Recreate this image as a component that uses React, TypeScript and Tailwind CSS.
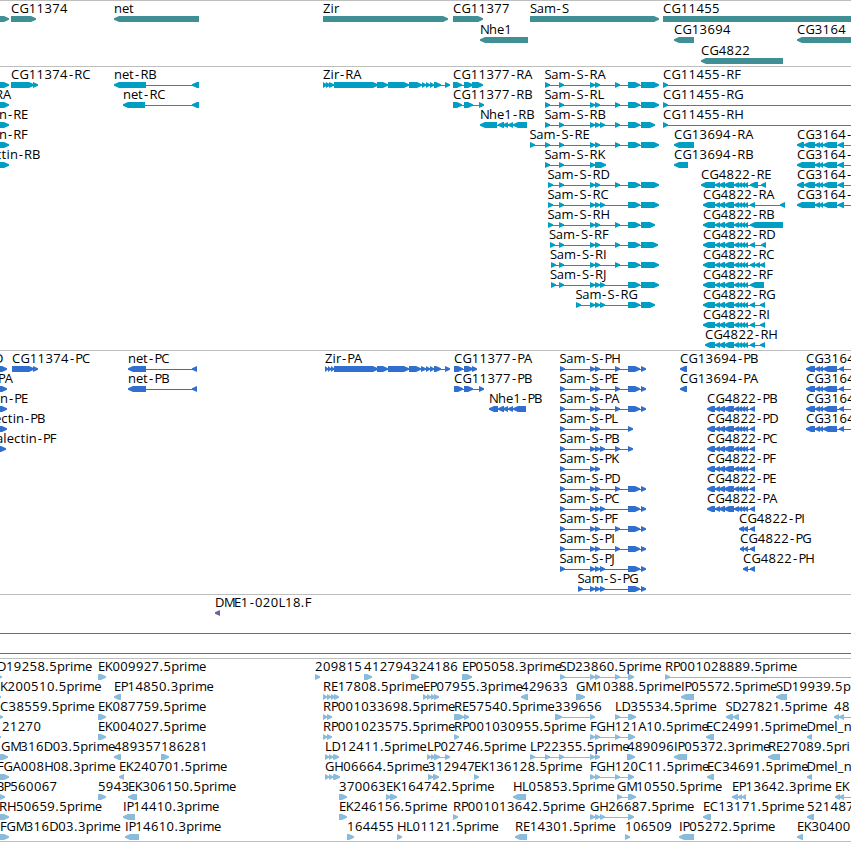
type Feature = {
  name: string;
  x: number;
  dir: "fwd" | "rev";
  // flat list of exon bounds: start, end, start, end...
  exons: number[];
};

const fwd = (name: string, x: number, ...exons: number[]): Feature => ({ name, x, dir: "fwd", exons });
const rev = (name: string, x: number, ...exons: number[]): Feature => ({ name, x, dir: "rev", exons });

const GENES: Feature[][] = [
  [
    fwd("", 0, -10, 9),
    fwd("CG11374", 11, 11, 36),
    rev("net", 114, 114, 199),
    fwd("Zir", 323, 323, 448),
    fwd("CG11377", 453, 453, 483),
    fwd("Sam-S", 530, 530, 659),
    fwd("CG11455", 663, 663, 900),
  ],
  [rev("Nhe1", 480, 480, 528), rev("CG13694", 674, 674, 694), rev("CG3164", 797, 797, 900)],
  [rev("CG4822", 701, 701, 783)],
];

// exon groups shared between isoforms
const S_TAIL = [628, 640, 641, 659];
const S_SHORT = [628, 640, 641, 655];
const S_TWO = [590, 595, 595, 600];
const S_THREE = [590, 595, 595, 600, 600, 605];
const S_MID = [615, 620];
const S_PTAIL = [628, 640, 641, 646];
const C48 = [715, 720, 719, 725, 724, 734, 734, 739, 738, 742, 741, 745, 744, 748];
const C31A = [797, 804, 804, 815, 815, 820, 819, 823, 823, 837, 838, 844, 900, 905];
const C31B = [797, 815, 815, 820, 819, 823, 823, 837, 838, 844, 900, 905];
const C31P = [806, 815, 815, 820, 819, 823, 823, 837, 839, 844, 900, 905];

const TRANSCRIPTS: Feature[][] = [
  [
    fwd("", 0, -10, 9),
    fwd("CG11374-RC", 11, 11, 34, 33, 38),
    rev("net-RB", 114, 114, 146, 192, 199),
    fwd("Zir-RA", 323, 323, 327, 326, 330, 329, 334, 334, 378, 377, 388, 388, 409, 409, 422, 422, 426, 426, 430, 430, 434, 434, 441, 445, 450),
    fwd("CG11377-RA", 453, 453, 462, 464, 473, 472, 483),
    fwd("Sam-S-RA", 544.5, 545, 550, 559, 564, ...S_TWO, ...S_MID, ...S_TAIL),
    fwd("CG11455-RF", 663, 663, 668, 900, 905),
  ],
  [
    fwd("RA", -5, -10, 9),
    rev("net-RC", 123, 123, 145, 192, 199),
    fwd("CG11377-RB", 453, 453, 462, 464, 473, 479, 484),
    fwd("Sam-S-RL", 544.5, 545, 550, 559, 564, ...S_TWO, ...S_MID, ...S_TAIL),
    fwd("CG11455-RG", 663, 663, 668, 900, 905),
  ],
  [
    fwd("n-RE", -1, -10, 9),
    rev("Nhe1-RB", 480, 480, 497, 498, 504, 503, 508, 508, 513, 513, 527),
    fwd("Sam-S-RB", 544.5, 545, 550, 559, 564, ...S_THREE, ...S_MID, ...S_SHORT),
    fwd("CG11455-RH", 663, 663, 668, 900, 905),
  ],
  [
    fwd("n-RF", -1, -10, 9),
    fwd("Sam-S-RE", 529.5, 530, 535, 545, 550, 559, 564, ...S_TWO, ...S_MID, ...S_TAIL),
    rev("CG13694-RA", 674, 674, 694),
    rev("CG3164-", 797, ...C31A),
  ],
  [
    fwd("ctin-RB", -5, -10, 9),
    fwd("Sam-S-RK", 544.5, 545, 550, 559, 564, 590, 595, 595, 606),
    rev("CG13694-RB", 674, 674, 688),
    rev("CG3164-", 797, ...C31B),
  ],
  [
    fwd("Sam-S-RD", 547.5, 548, 553, 559, 564, ...S_TWO, ...S_MID, ...S_TAIL),
    rev("CG4822-RE", 701, 701, 715, ...C48, 750, 758, 761, 766),
    rev("CG3164-", 797, ...C31A),
  ],
  [
    fwd("Sam-S-RC", 547.5, 548, 553, 559, 564, ...S_THREE, ...S_TAIL),
    rev("CG4822-RA", 703, 703, 715, ...C48, 750, 755, 780, 785),
    rev("CG3164-", 797, ...C31B),
  ],
  [
    fwd("Sam-S-RH", 547.5, 548, 553, 559, 564, ...S_TWO, ...S_MID, ...S_SHORT),
    rev("CG4822-RB", 703, 703, 715, ...C48, 750, 783),
  ],
  [
    fwd("Sam-S-RF", 549, 550, 555, 559, 564, ...S_TWO, ...S_MID, 628, 640, 641, 658),
    rev("CG4822-RD", 703, 703, 715, ...C48, 750, 755, 761, 766),
  ],
  [
    fwd("Sam-S-RI", 550, 551, 556, 559, 564, ...S_TWO, ...S_MID, ...S_TAIL),
    rev("CG4822-RC", 703, 703, 715, ...C48, 750, 755, 755, 760, 760, 765),
  ],
  [
    fwd("Sam-S-RJ", 550, 551, 556, 559, 564, ...S_THREE, ...S_TAIL),
    rev("CG4822-RF", 703, 703, 715, ...C48, 750, 764),
  ],
  [
    fwd("Sam-S-RG", 575.5, 576, 581, ...S_THREE, ...S_SHORT),
    rev("CG4822-RG", 703, 703, 715, ...C48, 750, 755, 760, 765),
  ],
  [rev("CG4822-RI", 703, 703, 715, ...C48, 750, 755, 760, 765)],
  [rev("CG4822-RH", 705, 705, 715, ...C48, 750, 755, 760, 765)],
];

const PROTEINS: Feature[][] = [
  [
    fwd("D", -6, -10, 7),
    fwd("CG11374-PC", 12, 12, 34, 33, 38),
    rev("net-PC", 128, 128, 146, 192, 197),
    fwd("Zir-PA", 325, 325, 328, 328, 331, 331, 334, 334, 378, 377, 388, 388, 409, 409, 421, 421, 426, 426, 430, 430, 434, 434, 441, 445, 450),
    fwd("CG11377-PA", 454, 454, 463, 464, 473, 472, 477),
    fwd("Sam-S-PH", 559.5, 560, 565, ...S_TWO, ...S_MID, ...S_PTAIL),
    rev("CG13694-PB", 680, 680, 687),
    rev("CG3164", 806, ...C31P),
  ],
  [
    fwd("PA", -2, -10, 7),
    rev("net-PB", 128, 128, 146, 192, 197),
    fwd("CG11377-PB", 454, 454, 463, 464, 473, 479, 484),
    fwd("Sam-S-PE", 559.5, 560, 565, ...S_TWO, ...S_MID, ...S_PTAIL),
    rev("CG13694-PA", 680, 680, 687),
    rev("CG3164", 806, ...C31P),
  ],
  [
    fwd("n-PE", 0, -10, 7),
    rev("Nhe1-PB", 489, 489, 498, 498, 504, 503, 508, 508, 513, 513, 526),
    fwd("Sam-S-PA", 559.5, 560, 565, ...S_TWO, ...S_MID, ...S_PTAIL),
    rev("CG4822-PB", 707, 707, 715, ...C48, 750, 755),
    rev("CG3164", 806, ...C31P),
  ],
  [
    fwd("ectin-PB", -6, -10, 7),
    fwd("Sam-S-PL", 559.5, 560, 565, ...S_TWO, 628, 633),
    rev("CG4822-PD", 707, 707, 715, ...C48, 750, 755),
    rev("CG3164", 806, ...C31P),
  ],
  [
    fwd("alectin-PF", -4, -10, 6),
    fwd("Sam-S-PB", 559.5, 560, 565, ...S_THREE, ...S_MID, 628, 633),
    rev("CG4822-PC", 707, 707, 715, ...C48, 750, 755),
  ],
  [
    fwd("Sam-S-PK", 559.5, 560, 565, ...S_TWO),
    rev("CG4822-PF", 707, 707, 715, ...C48, 750, 755),
  ],
  [
    fwd("Sam-S-PD", 559.5, 560, 565, ...S_TWO, ...S_MID, ...S_PTAIL),
    rev("CG4822-PE", 707, 707, 715, ...C48, 750, 755),
  ],
  [
    fwd("Sam-S-PC", 559.5, 560, 565, ...S_THREE, ...S_PTAIL),
    rev("CG4822-PA", 707, 707, 715, ...C48, 750, 755),
  ],
  [
    fwd("Sam-S-PF", 559.5, 560, 565, ...S_TWO, ...S_MID, ...S_PTAIL),
    rev("CG4822-PI", 739, 739, 744, 743, 748, 750, 755),
  ],
  [
    fwd("Sam-S-PI", 559.5, 560, 565, ...S_TWO, ...S_MID, ...S_PTAIL),
    rev("CG4822-PG", 740, 740, 744, 744, 748, 750, 755),
  ],
  [
    fwd("Sam-S-PJ", 559.5, 560, 565, ...S_THREE, ...S_PTAIL),
    rev("CG4822-PH", 743, 743, 748, 750, 755),
  ],
  [fwd("Sam-S-PG", 577.5, 578, 583, ...S_THREE, ...S_PTAIL)],
];

const CLONES: Feature[][] = [[rev("DME1-020L18.F", 215, 215, 220)]];

const ESTS: Feature[][] = [
  [
    fwd("D19258.5prime", -3, -10, 2),
    fwd("EK009927.5prime", 98, 98, 106),
    fwd("209815", 315, 315, 320),
    fwd("412794", 364, 364, 372),
    fwd("324186", 411, 411, 419),
    fwd("EP05058.3prime", 462, 462, 472),
    fwd("SD23860.5prime", 559.5, 560, 565, ...S_TWO, ...S_MID, 628, 634),
    fwd("RP001028889.5prime", 665, 665, 670, 900, 905),
  ],
  [
    fwd("K200510.5prime", 0, -10, 1),
    rev("EP14850.3prime", 114, 114, 121),
    fwd("RE17808.5prime", 323, 323, 327, 327, 331, 331, 335, 334, 339),
    fwd("EP07955.3prime", 423, 423, 427, 427, 431, 431, 435, 434, 439),
    rev("429633", 521, 521, 528),
    fwd("GM10388.5prime", 576, 576, 585),
    rev("IP05572.5prime", 681, 681, 694),
    rev("SD19939.5p", 776, 776, 787),
  ],
  [
    fwd("C38559.5prime", 0, -10, 3),
    fwd("EK087759.5prime", 98, 98, 106),
    fwd("RP001033698.5prime", 323, 323, 327, 327, 332),
    fwd("RE57540.5prime", 454, 454, 464, 464, 469),
    fwd("339656", 555, 555, 562, 590, 595),
    fwd("LD35534.5prime", 615, 615, 620, 628, 636),
    rev("SD27821.5prime", 725.5, 726, 733, 733, 739),
    rev("48", 834, 834, 839, 839, 844, 900, 905),
  ],
  [
    fwd("21270", 2, -10, 1),
    fwd("EK004027.5prime", 98, 98, 106),
    fwd("RP001023575.5prime", 323, 323, 327, 327, 332),
    fwd("RP001030955.5prime", 454, 454, 459),
    fwd("FGH121A10.5prime", 590, ...S_TWO, ...S_MID, 628, 635),
    rev("EC24991.5prime", 706, 706, 714),
    rev("Dmel_n", 806.5, 807, 812),
  ],
  [
    fwd("GM316D03.5prime", 1, -10, 8),
    rev("489357", 114, 114, 121),
    fwd("186281", 161, 161, 169),
    fwd("LD12411.5prime", 325, 325, 329, 329, 333, 333, 336, 334, 339),
    fwd("LP02746.5prime", 427, 427, 431, 431, 435, 434, 440, 445, 450),
    fwd("LP22355.5prime", 530, 530, 535, 545, 550, 559, 564, ...S_TWO),
    fwd("489096", 627, 627, 635),
    rev("IP05372.3prime", 674, 674, 687),
    rev("RE27089.5pri", 768, 768, 780),
  ],
  [
    fwd("FGA008H08.3prime", -3, -10, 9),
    rev("EK240701.5prime", 119, 119, 124),
    fwd("GH06664.5prime", 325, 325, 329, 329, 333, 333, 336, 334, 340),
    fwd("312947", 428, 428, 433, 433, 439),
    fwd("EK136128.5prime", 474, 474, 479),
    fwd("FGH120C11.5prime", 590, ...S_TWO, ...S_MID, 628, 634),
    rev("EC34691.5prime", 707, 707, 714),
    rev("Dmel_n", 806.5, 807, 812),
  ],
  [
    fwd("BP560067", -4, -10, 5),
    fwd("5943", 98, 98, 106),
    rev("EK306150.5prime", 128, 128, 137),
    fwd("370063", 339, 339, 347),
    fwd("EK164742.5prime", 386, 386, 391, 390, 397),
    rev("HL05853.5prime", 513, 513, 526),
    fwd("GM10550.5prime", 617, 617, 622, 628, 636),
    rev("EP13642.3prime", 732, 732, 738, 738, 742, 742, 746),
    rev("EK", 835, 835, 840, 839, 844, 900, 905),
  ],
  [
    fwd("RH50659.5prime", -1, -10, 9),
    rev("IP14410.3prime", 123, 123, 135),
    fwd("EK246156.5prime", 339, 339, 347),
    fwd("RP001013642.5prime", 453, 453, 458),
    fwd("GH26687.5prime", 590, ...S_THREE, 628, 634),
    rev("EC13171.5prime", 703, 703, 711),
    rev("521487", 807, 807, 814),
  ],
  [
    fwd("FGM316D03.3prime", 0, -10, 9),
    rev("IP14610.3prime", 125, 125, 139),
    fwd("164455", 347, 347, 354),
    fwd("HL01121.5prime", 397, 397, 402),
    rev("RE14301.5prime", 515, 515, 527),
    fwd("106509", 625, 625, 630),
    rev("IP05272.5prime", 679, 679, 694),
    rev("EK30400", 797, 797, 803),
  ],
];

// label advance widths in px, anything missing is a digit
const ADVANCE: Record<string, number> = {
  A: 8, B: 7.5, C: 8.5, D: 9, E: 6.8, F: 6.5, G: 9.2, H: 9, I: 3.4, J: 4, K: 7.6, L: 6.6, M: 10,
  N: 9, P: 6.8, R: 7.9, S: 6.8, Z: 7.5, a: 7.2, c: 6.5, e: 7.2, h: 8, i: 3.4, l: 3.5, m: 11.6, n: 7.9,
  p: 7.7, r: 5.1, t: 5, "-": 6.3, ".": 4, _: 6,
};

function glyphPositions(name: string, x: number) {
  let pos = x;
  return name
    .split("")
    .map((ch) => {
      const at = ch === "-" ? pos + 1 : pos;
      pos += ADVANCE[ch] ?? 7.85;
      return at.toFixed(1);
    })
    .join(" ");
}

function exonPoints(a: number, b: number, dir: Feature["dir"]) {
  const tip = Math.min(5, b - a);
  if (dir === "fwd") {
    return `${a},15 ${b - tip},15 ${b},17.3 ${b},18.7 ${b - tip},21 ${a},21`;
  }
  return `${b},15 ${a + tip},15 ${a},17.3 ${a},18.7 ${a + tip},21 ${b},21`;
}

function FeatureGlyph({ feature }: { feature: Feature }) {
  const { name, x, dir, exons } = feature;
  const first = exons[0];
  const last = exons[exons.length - 1];
  const pairs: [number, number][] = [];
  for (let i = 0; i < exons.length; i += 2) pairs.push([exons[i], exons[i + 1]]);

  return (
    <g>
      {pairs.length > 1 && <rect x={first + 1} y={18} width={last - first - 2} height={1} />}
      {pairs.map(([a, b], i) => (
        <polygon key={i} points={exonPoints(a, b, dir)} />
      ))}
      {name && (
        <text x={glyphPositions(name, x)} y={12} className="fill-black">
          {name}
        </text>
      )}
    </g>
  );
}

function Track({ rows, className, rowClass }: { rows: Feature[][]; className: string; rowClass: string }) {
  return (
    <section className={`w-full border-t border-[#bebebe] ${className}`}>
      {rows.map((row, i) => (
        <svg key={i} className={`block w-full overflow-visible ${rowClass}`}>
          {row.map((f, j) => (
            <FeatureGlyph key={j} feature={f} />
          ))}
        </svg>
      ))}
    </section>
  );
}

export default function App() {
  return (
    <main className="flex h-[842px] w-[851px] flex-col overflow-hidden bg-white font-['Open_Sans','Noto_Sans',sans-serif] text-[13px]">
      <Track rows={GENES} className="h-[66px] fill-[#3f8f95]" rowClass="h-[21px]" />
      <Track rows={TRANSCRIPTS} className="h-[284px] fill-[#009ec2]" rowClass="h-5" />
      <Track rows={PROTEINS} className="h-[244px] fill-[#316fce]" rowClass="h-5" />
      <div className="flex h-16 flex-col">
        <Track rows={CLONES} className="h-[39px] fill-[#7b5aa9]" rowClass="h-5" />
        {/* clones spanning the whole view */}
        <div className="h-5 border-t border-[#7b5aa9]" />
        <div className="border-t border-[#7b5aa9]" />
      </div>
      <Track rows={ESTS} className="h-[183px] fill-[#88bbdc]" rowClass="h-5" />
      <div className="border-t border-[#bebebe]" />
    </main>
  );
}
